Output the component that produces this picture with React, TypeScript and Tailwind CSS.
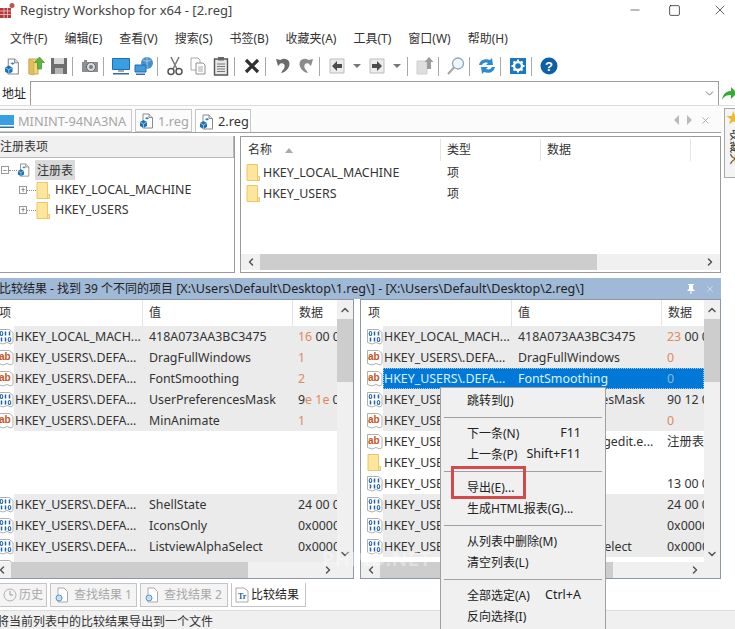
import type { ReactNode } from 'react';
import { Minus, Square, X, ChevronDown, ChevronLeft, ChevronRight, ChevronUp } from 'lucide-react';

const menus = ['文件(F)', '编辑(E)', '查看(V)', '搜索(S)', '书签(B)', '收藏夹(A)', '工具(T)', '窗口(W)', '帮助(H)'];

function RegIcon({ size = 16 }: { size?: number }) {
  return (
    <svg width={size} height={size} viewBox="0 0 16 16">
      <path d="M4 1h6l3.5 3.5V15H4z" fill="#fff" stroke="#8a8a8a" />
      <path d="M10 1v3.5h3.5" fill="#e8e8e8" stroke="#8a8a8a" />
      <path d="M1 9l3.5-2L8 9v4l-3.5 2L1 13z" fill="#1c72b8" />
      <path d="M1 9l3.5 2L8 9M4.500 11v4" stroke="#bcdcf2" strokeWidth="0.7" fill="none" />
      <path d="M8 4l2 1.200-2 1.200-2-1.200z" fill="#2d87c9" />
    </svg>
  );
}

function FolderIcon() {
  return (
    <svg width="14" height="17" viewBox="0 0 14 17">
      <path d="M1 .5h10.500v12H13.500v4H1z" fill="#fde59b" stroke="#e8c76d" />
      <path d="M11.500 12.500V16" stroke="#e8c76d" />
    </svg>
  );
}

// one row of binary digits in the value icon
function Bits({ y, bits }: { y: number; bits: string }) {
  return (
    <>
      {bits.split('').map((b, i) =>
        b === '0' ? (
          <ellipse key={i} cx={3.5 + i * 4} cy={y + 2} rx="1.300" ry="2" fill="none" stroke="#1f62a5" strokeWidth="1.100" />
        ) : (
          <path key={i} d={`M${3.5 + i * 4} ${y}v4`} stroke="#1f62a5" strokeWidth="1.500" />
        ),
      )}
    </>
  );
}

function BinIcon() {
  return (
    <svg width="16" height="16" viewBox="0 0 16 16">
      <path d="M.5 .5h11l3.500 3v10l-2 1.500-4-1.500-4 1.500-4.500-1.500z" fill="#fff" stroke="#b0b0b0" />
      <Bits y={2.5} bits="011" />
      <Bits y={8.5} bits="110" />
    </svg>
  );
}

function AbIcon() {
  return (
    <svg width="16" height="16" viewBox="0 0 16 16">
      <path d="M.5 .5h11l3.500 3v10l-2 1.500-4-1.500-4 1.500-4.500-1.500z" fill="#fff" stroke="#b0b0b0" />
      <text x="1" y="10" fontSize="10" fontWeight="700" fill="#c4541c" fontFamily="Liberation Sans">ab</text>
    </svg>
  );
}

function ToolIcon({ name }: { name: string }) {
  const box = { width: 20, height: 20, viewBox: '0 0 20 20' };
  switch (name) {
    case 'doc':
      return <RegIcon size={17} />;
    case 'open':
      return (
        <svg {...box}>
          <path d="M3 3h9v15H3z" fill="#f4d67e" stroke="#c7a24c" />
          <path d="M3 3l5 2.500V19L3 18z" fill="#e4bd5c" stroke="#c7a24c" strokeWidth="0.6" />
          <path d="M13.500 1l5 5.500h-3V13h-4V6.500h-3z" fill="#5fb53a" stroke="#3c8c1f" strokeWidth="0.6" />
        </svg>
      );
    case 'save':
      return (
        <svg {...box}>
          <path d="M2 2h16v16H2z" fill="#6f6f6f" />
          <path d="M5 2h10v6H5z" fill="#d9d9d9" />
          <path d="M6 12h8v6H6z" fill="#b5b5b5" />
        </svg>
      );
    case 'camera':
      return (
        <svg {...box}>
          <path d="M2 6h2V4h3v2h11v10H2z" fill="#8f8f8f" />
          <circle cx="11" cy="11" r="4.500" fill="#dcdcdc" stroke="#666" />
          <circle cx="11" cy="11" r="2" fill="#6c7f8c" />
        </svg>
      );
    case 'pc':
      return (
        <svg {...box}>
          <path d="M1.500 2.500h17v11h-17z" fill="#38a0e0" stroke="#1c6fae" />
          <path d="M7 14h6v2H7z" fill="#aaa" />
          <path d="M2 17h16v1.500H2z" fill="#2b6f9f" />
        </svg>
      );
    case 'net':
      return (
        <svg {...box}>
          <circle cx="13" cy="7" r="6" fill="#4a90c8" />
          <path d="M9 4c3 2 6 1 8 0M13 1v12" stroke="#cde3f3" strokeWidth="0.7" fill="none" />
          <path d="M1 9h11v7H1z" fill="#3e9bdc" stroke="#1c6fae" />
          <path d="M2 17.500h9V19H2z" fill="#2b6f9f" />
        </svg>
      );
    case 'cut':
      return (
        <svg {...box}>
          <path d="M6 1l6 12M14 1L8 13" stroke="#7c7c7c" strokeWidth="1.600" fill="none" />
          <circle cx="6" cy="15.500" r="3" fill="none" stroke="#555" strokeWidth="1.500" />
          <circle cx="14" cy="15.500" r="3" fill="none" stroke="#555" strokeWidth="1.500" />
        </svg>
      );
    case 'copy':
      return (
        <svg {...box}>
          <path d="M3 2h7l2 2v10H3z" fill="#fff" stroke="#a8a8a8" />
          <path d="M8 7h7l2 2v9H8z" fill="#fff" stroke="#8f8f8f" />
          <path d="M10 11h5M10 13h5M10 15h5" stroke="#a8a8a8" />
        </svg>
      );
    case 'paste':
      return (
        <svg {...box}>
          <path d="M3.500 3h13v16h-13z" fill="#e8e8e8" stroke="#555" strokeWidth="1.400" />
          <path d="M7 1h6v3.500H7z" fill="#666" />
          <path d="M6 8h8M6 10.500h8M6 13h8M6 15.500h8" stroke="#777" />
        </svg>
      );
    case 'del':
      return (
        <svg {...box}>
          <path d="M4 4l12 12M16 4L4 16" stroke="#303030" strokeWidth="3.200" fill="none" />
        </svg>
      );
    case 'undo':
      return (
        <svg {...box}>
          <path d="M3 3l2 7 2.500-2.500c4-1.500 6 3 2 7l-1.500 2.500c6-1 10-7 8-11.500-1.500-3-6-3.500-8.500-1.500z" fill="#6b6b6b" />
        </svg>
      );
    case 'redo':
      return (
        <svg {...box}>
          <path d="M17 3l-2 7-2.500-2.500c-4-1.500-6 3-2 7l1.500 2.500c-6-1-10-7-8-11.500 1.500-3 6-3.500 8.500-1.500z" fill="#8c8c8c" />
        </svg>
      );
    case 'back':
      return (
        <svg {...box}>
          <path d="M3 3h14v14H3z" fill="#ececec" stroke="#bcbcbc" />
          <path d="M5 10l5-5v3h5v4h-5v3z" fill="#4c4c4c" />
        </svg>
      );
    case 'forward':
      return (
        <svg {...box}>
          <path d="M3 3h14v14H3z" fill="#ececec" stroke="#bcbcbc" />
          <path d="M15 10l-5-5v3H5v4h5v3z" fill="#4c4c4c" />
        </svg>
      );
    case 'up':
      return (
        <svg {...box}>
          <path d="M2 5h10v13H2z" fill="#dedede" stroke="#cfcfcf" />
          <path d="M14 1l4.500 5H16v7h-4V6H9.500z" fill="#9c9c9c" />
        </svg>
      );
    case 'find':
      return (
        <svg {...box}>
          <circle cx="12" cy="7.500" r="5.500" fill="#eef5fb" stroke="#8ba6bb" strokeWidth="1.300" />
          <path d="M8 11.500L2 18" stroke="#a7a7a7" strokeWidth="2.200" />
        </svg>
      );
    case 'refresh':
      return (
        <svg {...box}>
          <path d="M2 9c1-5 6-7 11-5l2-2 1 7h-7l2-2c-3-1-5 0-6 2z" fill="#2d8ad0" />
          <path d="M18 11c-1 5-6 7-11 5l-2 2-1-7h7l-2 2c3 1 5 0 6-2z" fill="#2d8ad0" />
        </svg>
      );
    case 'gear':
      return (
        <svg {...box}>
          <path d="M2 2h16v16H2z" fill="#1a78c2" />
          <circle cx="10" cy="10" r="4" fill="none" stroke="#fff" strokeWidth="2.400" />
          <path d="M10 3.500v2.500M10 14v2.500M3.500 10H6M14 10h2.500M5.500 5.500l1.700 1.700M12.800 12.800l1.700 1.700M14.500 5.500l-1.700 1.700M7.200 12.800l-1.700 1.700" stroke="#fff" strokeWidth="2" />
        </svg>
      );
    default:
      return (
        <svg {...box}>
          <circle cx="10" cy="10" r="8.500" fill="#0f5fa8" />
          <text x="10" y="15" textAnchor="middle" fontSize="13" fontWeight="700" fill="#fff" fontFamily="Liberation Sans">?</text>
        </svg>
      );
  }
}

function Slot({ name }: { name: string }) {
  return (
    <div className="flex w-[23px] shrink-0 items-center justify-center">
      <ToolIcon name={name} />
    </div>
  );
}

function Sep() {
  return <div className="ml-[2px] mr-[5px] h-[19px] w-px shrink-0 bg-[#a8a8a8]" />;
}

function Drop() {
  return (
    <div className="flex w-[17px] shrink-0 items-center justify-center">
      <div className="h-0 w-0 border-x-[4px] border-t-[4px] border-x-transparent border-t-[#777]" />
    </div>
  );
}

function HScroll({ left, thumb, tail }: { left: number; thumb: string; tail: string }) {
  return (
    <div className="flex h-[16px] shrink-0 items-center bg-[#f0f0f0]">
      <div className="flex shrink-0 items-center justify-center" style={{ width: left }}>
        <ChevronLeft size={12} strokeWidth={3} color="#555" />
      </div>
      <div className={`h-full bg-[#cdcdcd] ${thumb}`} />
      <div className="flex-1" />
      <div className={`flex shrink-0 items-center justify-center ${tail}`}>
        <ChevronRight size={12} strokeWidth={3} color="#555" />
      </div>
    </div>
  );
}

type Row = {
  icon: 'bin' | 'ab' | 'folder' | 'none';
  key?: string;
  value?: string;
  data?: ReactNode;
  gray?: boolean;
  selected?: boolean;
};

const U = 'HKEY_USERS\\.DEFA...';
const O = 'text-[#e08a5c]';

const leftRows: Row[] = [
  { icon: 'bin', key: 'HKEY_LOCAL_MACH...', value: '418A073AA3BC3475', gray: true, data: <><span className={O}>16</span> 00 00</> },
  { icon: 'ab', key: U, value: 'DragFullWindows', gray: true, data: <span className={O}>1</span> },
  { icon: 'ab', key: U, value: 'FontSmoothing', gray: true, data: <span className={O}>2</span> },
  { icon: 'bin', key: U, value: 'UserPreferencesMask', gray: true, data: <>9<span className={O}>e 1e</span> 00</> },
  { icon: 'ab', key: U, value: 'MinAnimate', gray: true, data: <span className={O}>1</span> },
  { icon: 'none' },
  { icon: 'none' },
  { icon: 'none' },
  { icon: 'bin', key: U, value: 'ShellState', gray: true, data: '24 00 00' },
  { icon: 'bin', key: U, value: 'IconsOnly', gray: true, data: '0x00000' },
  { icon: 'bin', key: U, value: 'ListviewAlphaSelect', gray: true, data: '0x00000' },
  { icon: 'bin', gray: true },
];

const rightRows: Row[] = [
  { icon: 'bin', key: 'HKEY_LOCAL_MACH...', value: '418A073AA3BC3475', gray: true, data: <><span className={O}>23</span> 00 00</> },
  { icon: 'ab', key: U, value: 'DragFullWindows', gray: true, data: <span className={O}>0</span> },
  { icon: 'ab', key: U, value: 'FontSmoothing', selected: true, data: <span className="text-[#8fb8d8]">0</span> },
  { icon: 'bin', key: U, value: 'UserPreferencesMask', gray: true, data: '90 12 00' },
  { icon: 'ab', key: U, value: 'MinAnimate', gray: true, data: <span className={O}>0</span> },
  { icon: 'ab', key: U, value: 'C:\\Windows\\regedit.e...', data: '注册表' },
  { icon: 'folder', key: U },
  { icon: 'bin', key: U, value: 'Binary', data: '13 00 00' },
  { icon: 'bin', key: U, value: 'ShellState', gray: true, data: '24 00 00' },
  { icon: 'bin', key: U, value: 'IconsOnly', gray: true, data: '0x00000' },
  { icon: 'bin', key: U, value: 'ListviewAlphaSelect', gray: true, data: '0x00000' },
];

function RowLine({ row }: { row: Row }) {
  const tone = row.selected
    ? 'bg-[#0078d7] text-[#dff1ff] outline-dotted outline-1 -outline-offset-1 outline-[#9cc8ea]'
    : row.gray
      ? 'bg-[#ebebeb]'
      : '';
  return (
    <div className="flex h-[21px] shrink-0 items-center">
      <div className="flex w-[22px] shrink-0 justify-start pl-[6px]">
        {row.icon === 'bin' && <BinIcon />}
        {row.icon === 'ab' && <AbIcon />}
        {row.icon === 'folder' && <FolderIcon />}
      </div>
      <div className={`flex h-full min-w-0 flex-1 items-center overflow-hidden pt-[2px] text-[12.4px] ${tone}`}>
        <div className="w-[135px] shrink-0 truncate pl-[1px]">{row.key}</div>
        <div className="w-[149px] shrink-0 whitespace-nowrap">{row.value}</div>
        <div className="whitespace-nowrap">{row.data}</div>
      </div>
    </div>
  );
}

function ListPane({ rows, className, thumb }: { rows: Row[]; className: string; thumb: string }) {
  return (
    <div className={`flex h-[280px] shrink-0 flex-col border border-[#8e98a4] bg-white ${className}`}>
      <div className="flex min-h-0 flex-1">
        <div className="flex min-w-0 flex-1 flex-col overflow-hidden">
          <div className="flex h-[26px] shrink-0 items-center">
            <div className="flex h-full w-[151px] shrink-0 items-center border-r border-[#e4e4e4] pl-[7px]">项</div>
            <div className="flex h-full w-[150px] shrink-0 items-center border-r border-[#e4e4e4] pl-[6px]">值</div>
            <div className="pl-[6px]">数据</div>
          </div>
          {rows.map((row, i) => (
            <RowLine key={i} row={row} />
          ))}
        </div>
        <div className="flex w-[16px] shrink-0 flex-col items-center bg-[#f0f0f0]">
          <div className="flex h-[19px] items-center">
            <ChevronUp size={12} strokeWidth={3} color="#555" />
          </div>
          <div className="h-[63px] w-full bg-[#cdcdcd]" />
          <div className="flex-1" />
          <div className="flex h-[17px] items-center">
            <ChevronDown size={12} strokeWidth={3} color="#555" />
          </div>
        </div>
      </div>
      <HScroll left={19} thumb={thumb} tail="w-[50px]" />
    </div>
  );
}

function BottomTab({ icon, label, active, className }: { icon: ReactNode; label: string; active?: boolean; className: string }) {
  return (
    <div
      className={`flex h-[24px] shrink-0 items-center border border-[#c4c4c4] ${
        active ? 'bg-white' : 'bg-[#f4f4f4] text-[#a8a8a8]'
      } ${className}`}
    >
      {icon}
      {label}
    </div>
  );
}

function SearchDoc() {
  return (
    <svg width="16" height="16" viewBox="0 0 16 16">
      <path d="M4 1h6l3.500 3.500V15H4z" fill="#fff" stroke="#aaa" />
      <circle cx="5" cy="11" r="3" fill="#c5dff2" stroke="#5f95c2" />
    </svg>
  );
}

function MenuItem({ label, hint }: { label: string; hint?: string }) {
  return (
    <div className="flex h-[21px] items-center pl-[26px] pr-[24px]">
      <span className="whitespace-nowrap">{label}</span>
      {hint && <span className="ml-auto whitespace-nowrap text-[12.500px]">{hint}</span>}
    </div>
  );
}

function MenuSep() {
  return <div className="mx-[3px] my-[5.500px] h-px bg-[#a0a0a0]" />;
}

export default function App() {
  return (
    <div className="relative flex h-[629px] w-[735px] flex-col overflow-hidden bg-white font-['Noto_Sans','Noto_Sans_CJK_SC',sans-serif] text-[12px] leading-none text-[#333]">
      {/* title bar */}
      <div className="flex h-[21px] shrink-0 items-center">
        <svg width="15" height="17" viewBox="0 0 15 17" className="shrink-0">
          <path d="M0 6h11v10H0z" fill="#b13a3a" />
          <path d="M0 9h11M0 12.500h11M4 6v10M7.500 6v10" stroke="#f0c8c8" strokeWidth="0.8" />
          <circle cx="12" cy="3.500" r="2.500" fill="#c25050" />
        </svg>
        <span className="ml-[5px] whitespace-nowrap text-[13px] text-[#444]">Registry Workshop for x64 - [2.reg]</span>
        <div className="ml-auto flex items-center pb-[1px]">
          <Minus size={14} strokeWidth={1} color="#111" className="mr-[26px]" />
          <Square size={13} strokeWidth={1.300} color="#111" className="mr-[31px]" />
          <X size={16} strokeWidth={1} color="#111" className="mr-[7px]" />
        </div>
      </div>

      {/* menu */}
      <div className="flex h-[28px] shrink-0 items-center gap-[17px] pl-[10px] pt-[7px]">
        {menus.map((m) => (
          <span key={m} className="whitespace-nowrap">{m}</span>
        ))}
      </div>

      {/* toolbar */}
      <div className="flex h-[32px] shrink-0 items-center pl-[1px] pt-[2px]">
        <Slot name="doc" />
        <Slot name="open" />
        <Slot name="save" />
        <Sep />
        <Slot name="camera" />
        <Sep />
        <Slot name="pc" />
        <Slot name="net" />
        <Sep />
        <Slot name="cut" />
        <Slot name="copy" />
        <Slot name="paste" />
        <Sep />
        <Slot name="del" />
        <Sep />
        <Slot name="undo" />
        <Slot name="redo" />
        <Sep />
        <Slot name="back" />
        <Drop />
        <Slot name="forward" />
        <Drop />
        <Sep />
        <Slot name="up" />
        <Sep />
        <Slot name="find" />
        <Sep />
        <Slot name="refresh" />
        <Sep />
        <Slot name="gear" />
        <Sep />
        <Slot name="help" />
      </div>

      {/* address */}
      <div className="flex h-[25px] shrink-0 items-end border-b border-[#dcdcdc]">
        <div className="flex h-full w-[30px] shrink-0 items-center pl-[2px] pt-[2px] text-[#222]">地址</div>
        <div className="flex h-[24px] w-[689px] shrink-0 items-center justify-end border-l border-r border-t border-[#9c9c9c] pr-[2px]">
          <ChevronDown size={13} strokeWidth={1.500} color="#555" />
        </div>
        <svg width="14" height="14" viewBox="0 0 14 14" className="mb-[4px] ml-[3px] shrink-0">
          <path d="M0 13C1 6 5 4 9 4V0l6 6-6 6V8C5 8 2 9 0 13z" fill="#3da83a" />
        </svg>
      </div>

      {/* main area with the favourites strip on the right */}
      <div className="flex min-h-0 flex-1">
        <div className="flex min-w-0 flex-1 flex-col">
          {/* tabs */}
          <div className="flex h-[27px] shrink-0 items-end gap-[3px] border-b border-[#a0a0a0] bg-[#fbfbfb]">
            <div className="flex h-[23px] w-[132px] shrink-0 items-center gap-[3px] overflow-hidden border border-l-0 border-[#c8c8c8] pt-[1px] text-[12.800px] text-[#a6a6a6]">
              <svg width="15" height="15" viewBox="0 0 15 15" className="shrink-0">
                <path d="M0 1h14v10H0z" fill="#38a0e0" />
                <path d="M0 12.500h14V14H0z" fill="#2b6f9f" />
              </svg>
              MININT-94NA3NA
            </div>
            <div className="flex h-[23px] w-[57px] shrink-0 items-center gap-[3px] border border-[#c8c8c8] pl-[3px] pt-[1px] text-[12.800px] text-[#a6a6a6]">
              <RegIcon />
              1.reg
            </div>
            <div className="flex h-[23px] w-[56px] shrink-0 items-center gap-[3px] border border-b-0 border-[#c8c8c8] bg-white pl-[3px] pt-[1px] text-[12.800px] text-[#333]">
              <RegIcon />
              2.reg
            </div>
            <div className="ml-auto flex h-full items-center gap-[8px] pr-[10px] pt-[2px]">
              <div className="h-0 w-0 border-y-[5px] border-r-[5px] border-y-transparent border-r-[#bbb]" />
              <div className="h-0 w-0 border-y-[5px] border-l-[5px] border-y-transparent border-l-[#bbb]" />
              <X size={11} strokeWidth={2} color="#aaa" />
            </div>
          </div>

          {/* registry panes */}
          <div className="mt-[3px] flex h-[137px] shrink-0 gap-[5px]">
            <div className="flex w-[235px] shrink-0 flex-col border-b border-r border-[#9a9a9a]">
              <div className="flex h-[22px] shrink-0 items-center border-b border-r border-[#b8b8b8] bg-[#f0f0f0] pt-[1px]">注册表项</div>
              <div className="flex flex-col pt-[2px]">
                <div className="flex h-[20px] items-center">
                  <div className="ml-[1px] flex h-[8px] w-[8px] items-center justify-center border border-[#999] text-[8px] text-[#555]">−</div>
                  <div className="w-[8px] border-t border-dotted border-[#888]" />
                  <RegIcon size={14} />
                  <div className="ml-[4px] flex h-[20px] w-[40px] items-center bg-[#dadada] pl-[2px] pt-[1px]">注册表</div>
                </div>
                {['HKEY_LOCAL_MACHINE', 'HKEY_USERS'].map((k) => (
                  <div key={k} className="flex h-[20px] items-center pl-[19px]">
                    <div className="flex h-[8px] w-[8px] items-center justify-center border border-[#999] text-[8px] text-[#555]">+</div>
                    <div className="w-[9px] border-t border-dotted border-[#888]" />
                    <FolderIcon />
                    <span className="ml-[5px] whitespace-nowrap pt-[1px] text-[12.400px]">{k}</span>
                  </div>
                ))}
              </div>
            </div>
            <div className="flex min-w-0 flex-1 flex-col border border-[#9a9a9a]">
              <div className="flex h-[24px] shrink-0 items-center pt-[2px]">
                <div className="flex h-full w-[200px] shrink-0 items-center border-r border-[#e4e4e4] pl-[7px]">
                  名称
                  <div className="ml-[13px] h-0 w-0 border-x-[4px] border-b-[5px] border-x-transparent border-b-[#aaa]" />
                </div>
                <div className="flex h-full w-[100px] shrink-0 items-center border-r border-[#e4e4e4] pl-[6px]">类型</div>
                <div className="flex h-full w-[150px] shrink-0 items-center border-r border-[#e4e4e4] pl-[6px]">数据</div>
              </div>
              <div className="flex min-h-0 flex-1 flex-col pt-[1px]">
                {['HKEY_LOCAL_MACHINE', 'HKEY_USERS'].map((k) => (
                  <div key={k} className="flex h-[21px] items-center pl-[5px]">
                    <FolderIcon />
                    <span className="ml-[3px] w-[184px] whitespace-nowrap pt-[1px] text-[12.400px]">{k}</span>
                    <span className="pt-[1px]">项</span>
                  </div>
                ))}
              </div>
              <HScroll left={19} thumb="w-[337px]" tail="w-[20px]" />
              <div className="h-[2px] shrink-0" />
            </div>
          </div>

          {/* compare caption */}
          <div className="mt-[5px] flex h-[21px] shrink-0 items-center whitespace-nowrap bg-[#a0b9d6] pr-[6px] pt-[1px] text-[#222]">
            <span className="-ml-[1px]">比较结果 - 找到 39 个不同的项目 <span className="text-[12.600px]">[X:\Users\Default\Desktop\1.reg\] - [X:\Users\Default\Desktop\2.reg\]</span></span>
            <div className="ml-auto flex items-center gap-[10px] text-white">
              <svg width="8" height="10" viewBox="0 0 8 10">
                <path d="M1 0h6v1H6v4l1.500 1v1H4.500v3h-1V7H.5V6L2 5V1H1z" fill="#fff" />
              </svg>
              <X size={10} strokeWidth={1.500} color="#e8eef5" />
            </div>
          </div>

          {/* compare lists */}
          <div className="flex shrink-0 gap-[6px]">
            <ListPane rows={leftRows} className="-ml-[9px] w-[363px]" thumb="w-[237px]" />
            <ListPane rows={rightRows} className="w-[361px]" thumb="w-[233px]" />
          </div>

          {/* bottom tabs */}
          <div className="mt-[4px] flex shrink-0 items-start gap-[3px]">
            <BottomTab
              icon={
                <svg width="14" height="14" viewBox="0 0 14 14">
                  <circle cx="7" cy="7" r="6" fill="#f4f4f4" stroke="#b0b0b0" />
                  <path d="M7 3v4h3" stroke="#999" fill="none" />
                </svg>
              }
              label="历史"
              className="-ml-[1px] w-[48px] gap-[2px] pl-[3px]"
            />
            <BottomTab icon={<SearchDoc />} label="查找结果 1" className="w-[87px] gap-[4px] pl-[3px]" />
            <BottomTab icon={<SearchDoc />} label="查找结果 2" className="w-[88px] gap-[4px] pl-[3px]" />
            <BottomTab
              icon={
                <svg width="14" height="16" viewBox="0 0 14 16">
                  <path d="M1 1h8l4 3v11H1z" fill="#fff" stroke="#aaa" />
                  <text x="3" y="12" fontSize="8" fontWeight="700" fill="#1f5f9e" fontFamily="Liberation Serif">Tr</text>
                </svg>
              }
              label="比较结果"
              active
              className="w-[75px] gap-[2px] border-t-0 pl-[3px] text-[#222]"
            />
          </div>
        </div>

        {/* favourites strip */}
        <div className="flex w-[14px] shrink-0 flex-col pl-[3px]">
          <div className="mt-[2px] flex h-[70px] w-[30px] flex-col items-start border border-[#a8a8a8] bg-[#f4f4f4] pl-[1px] pt-[1px]">
            <span className="text-[15px] text-[#e8b93c]">★</span>
            <span className="ml-[3px] mt-[4px] whitespace-nowrap text-[12px] [text-orientation:sideways] [writing-mode:vertical-rl]">收藏夹</span>
          </div>
        </div>
      </div>

      {/* status bar */}
      <div className="flex h-[19px] shrink-0 items-center overflow-hidden whitespace-nowrap border-t border-[#dcdcdc] bg-[#f0f0f0] pt-[4px]">
        <span className="-ml-[3px]">将当前列表中的比较结果导出到一个文件</span>
      </div>

      {/* watermark */}
      <div className="absolute left-[322px] top-[549px] text-[20px] font-semibold tracking-wide text-white/40">PHPID.NET</div>

      {/* context menu */}
      <div className="absolute left-[440px] top-[387px] h-[260px] w-[166px] border border-[#a0a0a0] bg-[#f0f0f0] text-[#222]">
        <div className="pt-[2px]">
          <MenuItem label="跳转到(J)" />
          <MenuSep />
          <MenuItem label="下一条(N)" hint="F11" />
          <MenuItem label="上一条(P)" hint="Shift+F11" />
          <MenuSep />
          <MenuItem label="导出(E)..." />
          <MenuItem label="生成HTML报表(G)..." />
          <MenuSep />
          <MenuItem label="从列表中删除(M)" />
          <MenuItem label="清空列表(L)" />
          <MenuSep />
          <MenuItem label="全部选定(A)" hint="Ctrl+A" />
          <MenuItem label="反向选择(I)" />
        </div>
      </div>
      <div className="absolute left-[451px] top-[466px] h-[33px] w-[75px] border-[3px] border-[#d24a4a]" />
    </div>
  );
}
